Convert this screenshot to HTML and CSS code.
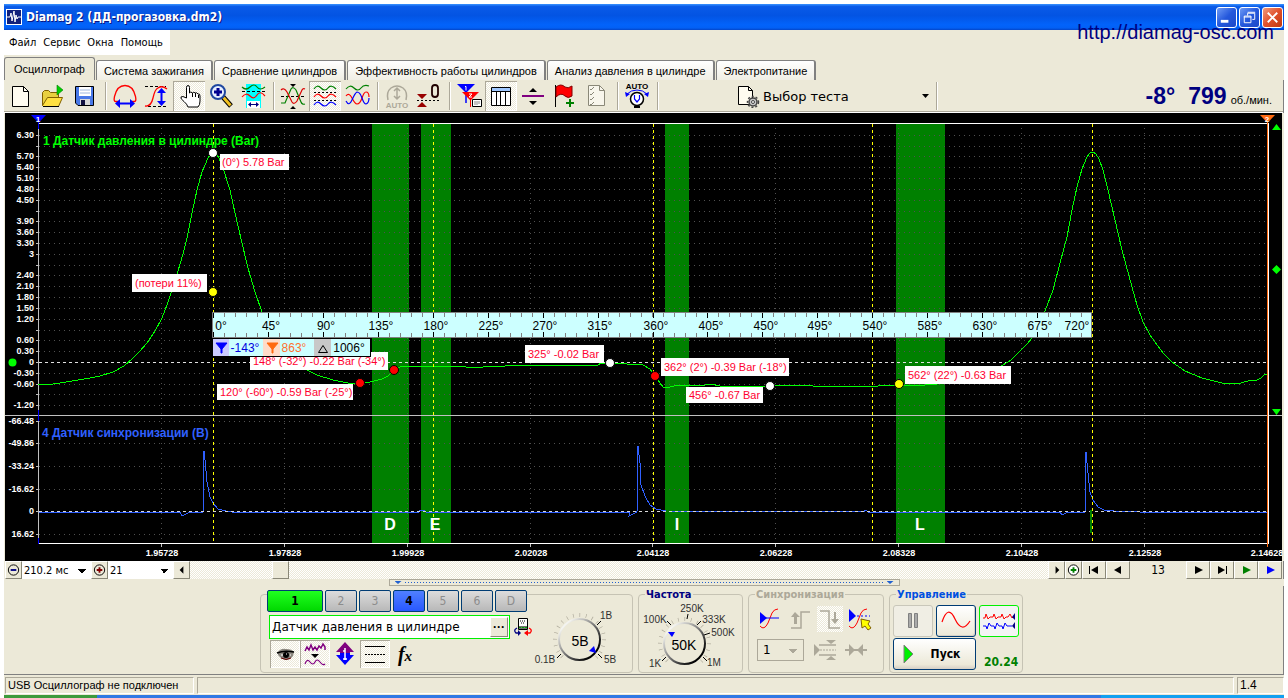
FILE: index.html
```html
<!DOCTYPE html>
<html lang="ru">
<head>
<meta charset="utf-8">
<title>Diamag 2 (ДД-прогазовка.dm2)</title>
<link rel="stylesheet" href="styles.css">
</head>
<body>
<div class="window">
  <header class="titlebar">
    <svg class="app-icon" width="16" height="16" viewBox="0 0 16 16"><rect width="16" height="16" fill="#fff"/><rect x="1" y="1" width="14" height="14" fill="#10207c"/><path d="M1 8h3l1-4 1 8 2-10 1 11 1-7 1 4 1-2h3" fill="none" stroke="#fff"/></svg>
    <h1 class="title">Diamag 2 (ДД-прогазовка.dm2)</h1>
    <div class="win-buttons">
      <button class="win-btn" aria-label="Свернуть"><svg width="20" height="20" viewBox="0 0 20 20"><path d="M4 14h8" stroke="#fff" stroke-width="3"/></svg></button>
      <button class="win-btn" aria-label="Восстановить"><svg width="20" height="20" viewBox="0 0 20 20" fill="none" stroke="#fff"><path d="M8 8V5.500h7.500V12H13M8 4.500h8"/><path d="M4.500 8.500h7v7h-7zM4 9.500h8"/></svg></button>
      <button class="win-btn close" aria-label="Закрыть"><svg width="20" height="20" viewBox="0 0 20 20"><path d="M5 5l10 10M15 5L5 15" stroke="#fff" stroke-width="2"/></svg></button>
    </div>
    <a class="site-link" href="#">http://diamag-osc.com</a>
  </header>

  <nav class="menu">
    <button>Файл</button><button>Сервис</button><button>Окна</button><button>Помощь</button>
  </nav>

  <div class="tabs" role="tablist">
    <button class="tab active" role="tab" aria-selected="true">Осциллограф</button>
    <button class="tab" role="tab">Система зажигания</button>
    <button class="tab" role="tab">Сравнение цилиндров</button>
    <button class="tab" role="tab">Эффективность работы цилиндров</button>
    <button class="tab" role="tab">Анализ давления в цилиндре</button>
    <button class="tab" role="tab">Электропитание</button>
  </div>

  <div class="toolbar">
    <button class="tool" aria-label="Новый"><svg viewBox="0 0 32 30"><path d="M7.500 5.500h11l5 5v15h-16z" fill="#fffcf0" stroke="#000"/><path d="M18.500 5.500v5h5" fill="none" stroke="#000"/></svg></button>
    <button class="tool" aria-label="Открыть"><svg viewBox="0 0 32 30"><path d="M5.500 24.500v-13l2-2h4l2 2h8v5" fill="#e8d040" stroke="#806000"/><path d="M5.500 24.500l5-8h15l-4 9h-15z" fill="#ffe040" stroke="#806000"/><path d="M6 25.500h16" stroke="#000"/><path d="M20 4v10l6-5z" fill="#00d000" stroke="#008000" stroke-width=".6"/></svg></button>
    <button class="tool" aria-label="Сохранить"><svg viewBox="0 0 32 30"><path d="M6.500 5.500h18v19H9l-2.500-2.500z" fill="#4878e8" stroke="#000"/><path d="M10 6h12v9H10z" fill="#fff"/><path d="M11 9h10M11 12h10" stroke="#a0b8e0"/><path d="M11 18h10v6H11z" fill="#d8d8d8"/><path d="M12 19h4v5h-4z" fill="#101040"/></svg></button>
    <span class="sep"></span>
    <button class="tool" aria-label="Период"><svg viewBox="0 0 32 30" fill="none"><path d="M9 20.500H6.500q-2 0-1-5Q8 4.500 16 4.500t10.500 11q1 5-1 5H23" stroke="#f00" stroke-width="1.300"/><path d="M8 22.500h16" stroke="#00f" stroke-width="2"/><path d="M11 18v9l-5-4.500zM21 18v9l5-4.500z" fill="#00f"/></svg></button>
    <button class="tool" aria-label="Амплитуда"><svg viewBox="0 0 32 30" fill="none"><path d="M4 5.500h21M7 25.500h18" stroke="#000" stroke-dasharray="3 2"/><path d="M4 25q6 1 8-8t5-10q4-3 9 1" stroke="#f00" stroke-width="1.300"/><path d="M20.500 9v13" stroke="#00f" stroke-width="2"/><path d="M16 12h9l-4.500-5zM16 20h9l-4.500 5z" fill="#00f"/></svg></button>
    <button class="tool pressed" aria-label="Рука"><svg viewBox="0 0 32 30"><path d="M13.500 17V6.500q0-2 1.500-2t1.500 2V12q1-2 3 0 1-1.500 3 0 1-1 2.500 1 2-.5 2 2v5q0 4-2 6H15q-1-3-4-5.500-4-3-3-4.500t5.500 1z" fill="#fff" stroke="#000"/><path d="M19.500 12v4M22.500 12v4M25.500 14v3" stroke="#000"/></svg></button>
    <button class="tool" aria-label="Масштаб"><svg viewBox="0 0 32 30"><path d="M18 16l8 9" stroke="#000" stroke-width="5"/><path d="M18.500 16.500l7 8" stroke="#f0c020" stroke-width="3"/><circle cx="13" cy="11" r="7" fill="#e8f0ff" stroke="#2048a0" stroke-width="2"/><path d="M13 7v8M9 11h8" stroke="#000090" stroke-width="3"/></svg></button>
    <button class="tool" aria-label="Участок"><svg viewBox="0 0 32 30" fill="none"><path d="M9 3h15v24H9z" fill="#0ff"/><path d="M5 6q4 4 8 0t7 0 8 0" stroke="#008000" stroke-width="1.200"/><path d="M5 10.500h23" stroke="#000" stroke-dasharray="3 2"/><path d="M5 16q4-5 8-1t7-1 8 1" stroke="#f00" stroke-width="1.200"/><path d="M10 20h13v7H10z" fill="#fff"/><path d="M12 23.500h9" stroke="#000080"/><path d="M14 21v5l-3-2.500zM19 21v5l3-2.500z" fill="#000080"/></svg></button>
    <span class="sep"></span>
    <button class="tool" aria-label="Наложение"><svg viewBox="0 0 32 30" fill="none"><path d="M4 15.500h24" stroke="#000" stroke-dasharray="3 2"/><path d="M4 22h4l6-14q2-3 5 1l5 12q1 3 4 2" stroke="#008000" stroke-width="1.200"/><path d="M4 9q3-3 6 2l5 10q2 3 5-1l5-11q1-2 3-1" stroke="#d00" stroke-width="1.200"/><path d="M13 3h6l-3 3zM13 28h6l-3-3z" fill="#000"/></svg></button>
    <button class="tool pressed" aria-label="Раздельно"><svg viewBox="0 0 32 30" fill="none"><path d="M5 8q3-5 7-1t7 0 8 1" stroke="#008000" stroke-width="1.200"/><path d="M5 11.500h23M5 19.500h23" stroke="#000" stroke-dasharray="2 2"/><path d="M5 16q3-5 7-1t7 0 8 1" stroke="#f00" stroke-width="1.200"/><path d="M5 24q3-5 7-1t7 0 8 1" stroke="#00f" stroke-width="1.200"/></svg></button>
    <button class="tool" aria-label="Совместно"><svg viewBox="0 0 32 30" fill="none"><path d="M5 8q4-5 8-1t7 0 8-2" stroke="#008000" stroke-width="1.200"/><path d="M5 15q3-4 6 2t5 6q3 0 5-6t4-6q3 0 3 5" stroke="#f00" stroke-width="1.200"/><path d="M5 20q3 6 6-1t5-8q3 0 5 6t4 6q3-1 3-6" stroke="#00f" stroke-width="1.200"/></svg></button>
    <span class="sep"></span>
    <button class="tool" aria-label="Авто" disabled><svg viewBox="0 0 32 30" fill="none"><path d="M7 19q-2-8 3-12 6-4 12 0 5 4 3 12M16 7v11M13 10l3-3 3 3M13 15l3 3 3-3" stroke="#aca899" stroke-width="1.500"/><text x="16" y="27" class="auto gray">AUTO</text></svg></button>
    <button class="tool" aria-label="Ноль"><svg viewBox="0 0 32 30"><path d="M4 13h10l-5 5zM4 26h10l-5-5z" fill="#900"/><path d="M4 19.500h23" stroke="#000" stroke-dasharray="2 2"/><rect x="19" y="4" width="6" height="12" rx="3" fill="none" stroke="#200000" stroke-width="1.800"/></svg></button>
    <span class="sep"></span>
    <button class="tool" aria-label="Маркеры"><svg viewBox="0 0 32 30"><path d="M4 3h18l-9 9z" fill="#00f"/><path d="M13 8v14" stroke="#00f" stroke-width="1.500"/><path d="M9 11h17l-8 8v7h-1v-7z" fill="#f00"/><path d="M12 5.500h1v4" fill="none" stroke="#fff"/><path d="M16 13h3l-3 3h3" fill="none" stroke="#fff"/><path d="M19.500 18.500h9v7h-9z" fill="#fff" stroke="#000"/><path d="M22 20v4M24 20v4M26 20v3" stroke="#888"/></svg></button>
    <button class="tool pressed" aria-label="Таблица"><svg viewBox="0 0 32 30"><path d="M6.500 6.500h19v18h-19z" fill="#fff" stroke="#000"/><path d="M7 7h18v3H7z" fill="#a0c8ff"/><path d="M7 10.500h18M11.500 11v13M15.500 11v13M20.500 11v13" stroke="#000"/></svg></button>
    <button class="tool" aria-label="Разделитель"><svg viewBox="0 0 32 30"><path d="M5 15h22" stroke="#800080" stroke-width="2"/><path d="M12 11h8l-4-4zM12 20h8l-4 4z" fill="#000"/></svg></button>
    <button class="tool" aria-label="Флаг"><svg viewBox="0 0 32 30"><path d="M6.500 4v22" stroke="#000"/><path d="M7 6q5-4 9 0 3 2 7-1v10q-4 3-7 0-4-4-9 1z" fill="#f00" stroke="#800000"/><path d="M21 18v8M17 22h8" stroke="#008000" stroke-width="2"/></svg></button>
    <button class="tool" aria-label="Список" disabled><svg viewBox="0 0 32 30"><path d="M7.500 4.500h11l5 5v15h-16z" fill="#f8f6ec" stroke="#8a8878"/><path d="M18.500 4.500v5h5M9 8l1 1 3-3M9 13l1 1 3-3M9 18l1 1 3-3M9 23l1 1 3-3" fill="none" stroke="#8a8878"/></svg></button>
    <span class="sep"></span>
    <button class="tool" aria-label="Авто напряжение"><svg viewBox="0 0 32 30" fill="none"><text x="16" y="8" class="auto">AUTO</text><path d="M6 13q4-4 10-4t10 4" stroke="#00f"/><path d="M4 11l1 5 4-3zM28 11l-1 5-4-3z" fill="#00f"/><circle cx="16" cy="18" r="6.500" fill="#fff" stroke="#000" stroke-width="1.500"/><path d="M13.500 14v4l2.500 3 2.500-3v-4" stroke="#00f" stroke-width="1.200"/><path d="M13 26h6" stroke="#000" stroke-width="2"/></svg></button>
    <span class="sep"></span>
    <button class="test-pick">
      <svg width="24" height="24" viewBox="0 0 24 24"><path d="M2.500 2.500h10l4 4v14h-14z" fill="#fffcf0" stroke="#000"/><path d="M12.500 2.500v4h4" fill="none" stroke="#000"/><circle cx="17" cy="18" r="4" fill="#c8c8c8" stroke="#444" stroke-width="1.500"/><circle cx="17" cy="18" r="5.500" fill="none" stroke="#444" stroke-width="1.500" stroke-dasharray="2 2"/><circle cx="17" cy="18" r="1.500" fill="#fff" stroke="#444"/></svg>
      <span class="test-name">Выбор теста</span>
      <span class="caret"></span>
    </button>
    <span class="sep"></span>
    <div class="rpm"><b>-8°</b><b>799</b><span>об./мин.</span></div>
  </div>

  <svg class="chart" viewBox="5 113 1277 448" role="img" aria-label="Осциллограмма">
    <rect x="5" y="113" width="1277" height="448" fill="#000"/>
    <g fill="#008000"><path d="M372 124h37v419h-37zM421 124h30v419h-30zM665 124h24v419h-24zM896 124h49v419h-49z"/></g>
    <path class="grid" d="M39 135.500h1228M39 146.500h1228M39 156.500h1228M39 167.500h1228M39 178.500h1228M39 189.500h1228M39 200.500h1228M39 211.500h1228M39 221.500h1228M39 232.500h1228M39 243.500h1228M39 254.500h1228M39 265.500h1228M39 275.500h1228M39 286.500h1228M39 297.500h1228M39 308.500h1228M39 319.500h1228M39 330.500h1228M39 340.500h1228M39 351.500h1228M39 373.500h1228M39 384.500h1228M39 394.500h1228M39 405.500h1228M39 421.500h1228M39 443.500h1228M39 466.500h1228M39 489.500h1228M39 534.500h1228"/>
    <path class="grid" d="M161.500 128v415M284.500 128v415M407.500 128v415M530.500 128v415M652.500 128v415M775.500 128v415M898.500 128v415M1021.500 128v415M1144.500 128v415"/>
    <path class="thin" stroke="#c0c0c0" d="M38.500 123v420M5 415.500h1277M36 135.500h3M36 146.500h3M36 156.500h3M36 167.500h3M36 178.500h3M36 189.500h3M36 200.500h3M36 211.500h3M36 221.500h3M36 232.500h3M36 243.500h3M36 254.500h3M36 265.500h3M36 275.500h3M36 286.500h3M36 297.500h3M36 308.500h3M36 319.500h3M36 330.500h3M36 340.500h3M36 351.500h3M36 362.500h3M36 373.500h3M36 384.500h3M36 394.500h3M36 405.500h3M36 421.500h3M36 443.500h3M36 466.500h3M36 489.500h3M36 511.500h3M36 534.500h3M161.500 544v3M284.500 544v3M407.500 544v3M530.500 544v3M652.500 544v3M775.500 544v3M898.500 544v3M1021.500 544v3M1144.500 544v3"/>
    <path class="thin" stroke="#fff" d="M38 123.500h1231M38 543.500h1231M1268.500 123v421"/>
    <path class="thin" stroke="#ff6a10" d="M1267.500 121v426"/>
    <path class="thin" stroke="#00f" d="M38.500 122v7M38.500 410v11M38.500 538v6"/>
    <path class="thin" stroke="#e0e0e0" stroke-dasharray="3 3" d="M39 362.500h1228"/>
    <polyline class="trace" stroke="#00ff00" points="38,384 53,384 60,383 90,378 100,376 113,372 124,366 133,358 140,351 147,343 155,331 162,318 167,305 172,290 178,271 183,254 187,238 192,213 197,190 202,172 208,158 211,154 213,153 216,154 219,158 223,168 230,190 235,213 242,243 248,268 255,292 262,312 270,331 280,348 292,361 305,369 317,375 333,380 348,383 360,384 370,382 382,379 388,376 394,370 400,367 407,366 413,366 430,367 450,366 466,367 483,367 505,366 533,365 598,365 601,363 615,363 627,364 643,365 650,369 655,376 660,383 663,387 667,388 677,385 690,385 700,386 711,384 720,386 745,386 770,386 795,385 813,386 878,386 887,385 900,386 925,385 937,384 965,382 985,375 1003,365 1011,360 1020,351 1027,344 1032,338 1039,326 1045,311 1053,290 1060,263 1067,237 1072,210 1077,187 1082,169 1087,157 1090,153 1093,152 1096,154 1099,159 1103,170 1108,190 1115,220 1122,250 1132,287 1137,305 1143,322 1150,335 1157,345 1164,354 1172,362 1185,371 1202,378 1222,383 1237,384 1248,381 1257,380 1261,378 1264,375 1267,374"/>
    <polyline class="trace" stroke="#3060ff" points="39,512 160,512 180,512 182,516 186,514 190,512 203,512 204,451 205,460 207,482 210,497 213,503 218,509 226,511 232,512 258,513 262,512 419,512 420,510 425,511 426,512 630,512 629,516 633,514 637,512 638,446 640,463 641,485 645,496 650,505 656,509 666,511 863,512 866,510 868,512 1060,512 1062,515 1068,512 1085,512 1086,452 1088,473 1090,492 1093,500 1098,507 1104,510 1114,511 1140,512 1267,512"/>
    <path class="thin" stroke="#d8d8d8" stroke-dasharray="3 3" d="M39 511.500h1228"/>
    <path class="thin" stroke="#ffff00" stroke-dasharray="3 3" d="M213.500 124v419M433.500 124v419M653.500 124v419M872.500 124v419M1092.500 124v419"/>
    <path d="M1090 510h2v23h-2z" fill="#008000"/>

    <g class="axis" text-anchor="end">
      <text x="34" y="138">6.30</text><text x="34" y="159">5.70</text><text x="34" y="170">5.40</text><text x="34" y="181">5.10</text><text x="34" y="192">4.80</text><text x="34" y="203">4.50</text><text x="34" y="224">3.90</text><text x="34" y="235">3.60</text><text x="34" y="246">3.30</text><text x="34" y="257">3</text><text x="34" y="278">2.40</text><text x="34" y="289">2.10</text><text x="34" y="300">1.80</text><text x="34" y="311">1.50</text><text x="34" y="322">1.20</text><text x="34" y="343">0.60</text><text x="34" y="354">0.30</text><text x="34" y="365">0</text><text x="34" y="376">-0.30</text><text x="34" y="387">-0.60</text><text x="34" y="408">-1.20</text><text x="34" y="424">-66.48</text><text x="34" y="446">-49.86</text><text x="34" y="469">-33.24</text><text x="34" y="492">-16.62</text><text x="34" y="514">0</text><text x="34" y="537">16.62</text>
    </g>
    <g class="axis" text-anchor="middle">
      <text x="162" y="556">1.95728</text><text x="285" y="556">1.97828</text><text x="408" y="556">1.99928</text><text x="531" y="556">2.02028</text><text x="653" y="556">2.04128</text><text x="776" y="556">2.06228</text><text x="899" y="556">2.08328</text><text x="1022" y="556">2.10428</text><text x="1145" y="556">2.12528</text><text x="1267" y="556">2.14628</text>
    </g>
    <text class="channel" x="43" y="145" fill="#00ff00">1 Датчик давления в цилиндре (Bar)</text>
    <text class="channel" x="42" y="437" fill="#3060ff">4 Датчик синхронизации (B)</text>
    <g class="zone"><text x="390" y="530">D</text><text x="435" y="530">E</text><text x="677" y="530">I</text><text x="920" y="530">L</text></g>

    <path d="M31 115h15l-7.500 8z" fill="#00f"/><text class="mark" x="38" y="122">1</text>
    <path d="M1260 115h15l-7.500 8z" fill="#ff6a10"/><text class="mark" x="1267" y="122">2</text>
    <g fill="#00ff00"><path d="M1272 130h9l-4.500-6zM1272 409h9l-4.500 6zM1276.500 265l4.500 4.500-4.500 4.500-4.500-4.500z"/><circle cx="12.500" cy="362.500" r="4"/></g>

    <g stroke="#000"><circle cx="213" cy="153" r="4.500" fill="#fff"/><circle cx="213" cy="292" r="4.500" fill="#ff0"/><circle cx="360" cy="383" r="4.500" fill="#f00"/><circle cx="394" cy="370" r="4.500" fill="#f00"/><circle cx="610" cy="363" r="4.500" fill="#fff"/><circle cx="655" cy="376" r="4.500" fill="#f00"/><circle cx="770" cy="386" r="4.500" fill="#fff"/><circle cx="899" cy="384" r="4.500" fill="#ff0"/></g>

    <path fill="#fff" stroke="none" d="M220 154h69v16h-69zM132 274h75v18h-75zM250 352h138v18H250zM217 384h136v16H217zM525 345h79v18h-79zM661 358h128v18H661zM686 387h77v16h-77zM905 366h106v18H905z"/>
    <g class="note">
      <text x="222" y="166">(0°) 5.78 Bar</text>
      <text x="135" y="287">(потери 11%)</text>
      <text x="253" y="365">148° (-32°) -0.22 Bar (-34°)</text>
      <text x="220" y="396">120° (-60°) -0.59 Bar (-25°)</text>
      <text x="528" y="358">325° -0.02 Bar</text>
      <text x="664" y="371">362° (2°) -0.39 Bar (-18°)</text>
      <text x="689" y="399">456° -0.67 Bar</text>
      <text x="908" y="379">562° (22°) -0.63 Bar</text>
    </g>

    <path d="M212.500 312.500h879v25h-879z" fill="#ccffff" stroke="#808080"/>
    <g class="thin" fill="none">
      <path stroke="#808080" stroke-width="4" stroke-dasharray="1 9.986" d="M213 315h878M213 335h878"/>
      <path stroke="#000" stroke-width="5" stroke-dasharray="1 53.930" stroke-dashoffset="-55" d="M213 315.500h878M213 334.500h878"/>
    </g>
    <g class="scale"><text x="221" y="330">0°</text><text x="271" y="330">45°</text><text x="326" y="330">90°</text><text x="381" y="330">135°</text><text x="436" y="330">180°</text><text x="491" y="330">225°</text><text x="545" y="330">270°</text><text x="600" y="330">315°</text><text x="656" y="330">360°</text><text x="711" y="330">405°</text><text x="766" y="330">450°</text><text x="820" y="330">495°</text><text x="875" y="330">540°</text><text x="930" y="330">585°</text><text x="985" y="330">630°</text><text x="1040" y="330">675°</text><text x="1077" y="330">720°</text></g>

    <path d="M213 338h158v19H213z" fill="#000"/>
    <path d="M213 339h157v17H213z" fill="#ccffff"/>
    <path d="M213 339h16v17h-16z" fill="#ccccff"/><path d="M263 339h17v17h-17z" fill="#ffdcc8"/><path d="M314 339h17v17h-17z" fill="#c8c8c8"/>
    <path d="M216 343h11l-5 6v4h-1v-4z" fill="#00f" stroke="#00f"/><path d="M267 343h11l-5 6v4h-1v-4z" fill="#ff6a10" stroke="#ff6a10"/><path d="M318.500 352.500h9l-4.500-7z" fill="none" stroke="#000"/>
    <g class="scale"><text x="245" y="352" fill="#0000e0">-143°</text><text x="294" y="352" fill="#ff7030">863°</text><text x="349" y="352">1006°</text></g>
  </svg>

  <div class="scroll-row">
    <button class="sq" aria-label="Уменьшить"><svg viewBox="0 0 16 16"><circle cx="8" cy="8" r="5.500" fill="none" stroke="#000"/><path d="M5 8h6" stroke="#000080" stroke-width="2"/></svg></button>
    <select class="span-sel" aria-label="Развёртка"><option>210.2 мс</option></select>
    <button class="sq" aria-label="Увеличить"><svg viewBox="0 0 16 16"><circle cx="8" cy="8" r="5.500" fill="none" stroke="#000"/><path d="M5 8h6M8 5v6" stroke="#800000" stroke-width="2"/></svg></button>
    <select class="div-sel" aria-label="Делений"><option>21</option></select>
    <button class="sq" aria-label="Влево"><svg viewBox="0 0 16 16"><path d="M10 4v8L6 8z"/></svg></button>
    <div class="track"><div class="thumb"></div></div>
    <button class="sq" aria-label="Вправо"><svg viewBox="0 0 16 16"><path d="M7 4v8l4-4z"/></svg></button>
    <button class="sq" aria-label="Добавить"><svg viewBox="0 0 16 16"><circle cx="8" cy="8" r="5.500" fill="#fff" stroke="#000"/><path d="M5 8h6M8 5v6" stroke="#008000" stroke-width="2"/></svg></button>
    <button class="nav" aria-label="В начало"><svg viewBox="0 0 22 16"><path d="M15 4v8L8 8zM6 4h1v8H6z"/></svg></button>
    <button class="nav" aria-label="Назад"><svg viewBox="0 0 22 16"><path d="M14 4v8L7 8z"/></svg></button>
    <span class="page-no">13</span>
    <button class="nav" aria-label="Вперёд"><svg viewBox="0 0 22 16"><path d="M8 4v8l8-4z"/></svg></button>
    <button class="nav" aria-label="В конец"><svg viewBox="0 0 22 16"><path d="M7 4v8l7-4zM15 4h1v8h-1z"/></svg></button>
    <button class="nav" aria-label="Воспроизвести"><svg viewBox="0 0 22 16"><path d="M8 4v8l8-4z" fill="#008000"/></svg></button>
    <button class="nav" aria-label="Воспроизвести всё"><svg viewBox="0 0 22 16"><path d="M8 4v8l8-4z" fill="#00f"/></svg></button>
  </div>

  <div class="collapse"><i></i><span></span><i></i></div>

  <div class="panels">
    <section class="group channels">
      <div class="channel-left">
        <div class="ch-row"><button class="ch ch1">1</button><button class="ch">2</button><button class="ch">3</button><button class="ch ch4">4</button><button class="ch">5</button><button class="ch">6</button><button class="ch">D</button></div>
        <div class="name-row">
          <div class="name-box"><input aria-label="Датчик" value="Датчик давления в цилиндре"><button class="dots" aria-label="Выбрать датчик">···</button></div>
          <svg width="20" height="20" viewBox="0 0 20 20"><path d="M5.500 1.500h9v11h-9z" fill="#fff" stroke="#000"/><path d="M6 9h8v3H6z" fill="#707070"/><path d="M6 10.500h8" stroke="#0a0" stroke-dasharray="2 1"/><path d="M7 4h6M8 6h3" stroke="#000" stroke-dasharray="1 1"/><path d="M4 11q-4 2-1 5h2" fill="none" stroke="#000080" stroke-width="1.300"/><path d="M5 13v6l3-3z" fill="#000080"/><path d="M16 11q4 2 1 5h-2" fill="none" stroke="#f00" stroke-width="1.300"/><path d="M15 13v6l-4-3z" fill="#f00"/></svg>
        </div>
        <div class="mode-row">
          <button class="mode pressed" aria-label="Показать"><svg viewBox="0 0 30 28"><path d="M8 12q3-4 8-3 6 0 8 3l-1 4q-3 4-7 4-5-1-8-5z" fill="#8c8880"/><path d="M7 13q7-3 17-1" fill="none" stroke="#000" stroke-width="1.500"/><circle cx="16" cy="15" r="3" fill="#000"/><path d="M11 15h2M20 15h1M16 14h1" stroke="#fff"/><path d="M11 18q5 3 10 0" fill="none" stroke="#600"/></svg></button>
          <button class="mode pressed" aria-label="Фильтр"><svg viewBox="0 0 30 28"><path d="M5 11l2-4 2 3 2-5 2 5 2-3 2 3 2-4 2 2 2-4 2 3v3" fill="none" stroke="#800080" stroke-width="1.500"/><path d="M11 14h8l-4 4z"/><path d="M5 24q2-6 5-2t5 0 5 0 5 2" fill="none" stroke="#800080" stroke-width="1.200"/></svg></button>
          <button class="mode" aria-label="Инверсия"><svg viewBox="0 0 30 28"><path d="M6 12l9-10 9 10h-4v2H10v-2z" fill="#800080"/><path d="M6 15l9 10 9-10h-4v-2H10v2z" fill="#00f"/><path d="M15 8v12M13 11h2M13 19h4" stroke="#fff" stroke-width="1.500"/></svg></button>
          <button class="mode pressed" aria-label="Сетка"><svg viewBox="0 0 30 28"><path d="M5 6.500h20M5 22.500h20" stroke="#000"/><path d="M5 14.500h20" stroke="#000" stroke-dasharray="2 1"/></svg></button>
          <button class="mode" aria-label="Функция"><span class="fx">f<small>x</small></span></button>
        </div>
      </div>
      <svg class="knob" width="98" height="76" viewBox="535 596 98 76">
        <defs><linearGradient id="rim" x1="0" y1="0" x2="1" y2="1"><stop offset=".15" stop-color="#f4f4f0"/><stop offset=".5" stop-color="#777"/><stop offset=".85" stop-color="#000"/></linearGradient></defs>
        <circle cx="580.500" cy="640.500" r="24.500" class="ticks" pathLength="240" transform="rotate(135 580.500 640.500)"/>
        <circle cx="580.500" cy="640.500" r="20.500" fill="#ece9d8" stroke="url(#rim)" stroke-width="2"/>
        <path d="M598 626l4-4M599 655l4 4M562 655l-4 4" stroke="#000"/>
        <path d="M590 652l5-5 2 7z" fill="#00f"/>
        <g class="knob-label"><text x="607" y="620" text-anchor="middle">1B</text><text x="546" y="664" text-anchor="middle">0.1B</text><text x="611" y="664" text-anchor="middle">5B</text></g>
        <text class="knob-value" x="581" y="647">5B</text>
      </svg>
    </section>

    <section class="group freq">
      <h2 class="navy">Частота</h2>
      <svg class="knob" width="103" height="70" viewBox="639 602 103 70">
        <circle cx="684.500" cy="643.500" r="24.500" class="ticks" pathLength="240" transform="rotate(135 684.500 643.500)"/>
        <circle cx="684.500" cy="643.500" r="20.500" fill="#ece9d8" stroke="url(#rim)" stroke-width="2"/>
        <path d="M667 621l4 4M687 619l1-5M697 625l4-4M704 635l6-2M703 657l4 4M666 657l-4 4" stroke="#000"/>
        <path d="M668 632h7l-3 5z" fill="#00f"/>
        <g class="knob-label" text-anchor="middle"><text x="655" y="623">100K</text><text x="692" y="612">250K</text><text x="714" y="623">333K</text><text x="723" y="636">500K</text><text x="655" y="667">1K</text><text x="714" y="666">1M</text></g>
        <text class="knob-value" x="684" y="650">50K</text>
      </svg>
    </section>

    <section class="group sync">
      <h2 class="gray">Синхронизация</h2>
      <div class="sync-row">
        <button class="sy" aria-label="Уровень"><svg viewBox="0 0 26 26"><path d="M3 20q4 5 8-3l4-10q2-4 6-4" fill="none" stroke="#f00"/><path d="M3 12h19" stroke="#00f"/><path d="M3 6v12l7-6z" fill="#00f"/></svg></button>
        <button class="sy" aria-label="Фронт"><svg viewBox="0 0 26 26"><path d="M4 22h10V6h9" fill="none" stroke="#aca899" stroke-width="1.500"/><path d="M8 6l-4 5h3v7h3v-7h3z" fill="#aca899"/></svg></button>
        <button class="sy dither" aria-label="Спад"><svg viewBox="0 0 26 26"><path d="M3 5h9v17h11" fill="none" stroke="#aca899" stroke-width="1.500"/><path d="M18 18l-4-5h3V6h2v7h3z" fill="#aca899"/></svg></button>
        <button class="sy" aria-label="Выбор уровня"><svg viewBox="0 0 26 26"><path d="M2 20q4 5 8-3l4-10q2-4 6-4" fill="none" stroke="#f00"/><path d="M10 10h13" stroke="#00f" stroke-dasharray="2 2"/><path d="M2 3v13l7-6z" fill="#00f"/><path d="M14 13l9 2-2 3 3 4-3 2-3-4-3 2z" fill="#ff0" stroke="#806000"/></svg></button>
      </div>
      <div class="sync-row">
        <select class="sync-sel" aria-label="Канал синхронизации" disabled><option>1</option></select>
        <svg width="26" height="24" viewBox="0 0 26 24"><path d="M4 6v12l6-6z" fill="#aca899"/><path d="M9 7h17M9 17h17" stroke="#aca899" stroke-width="1.500"/><path d="M10 12h16" stroke="#aca899" stroke-dasharray="2 1"/><path d="M16 2h10l-5 4zM16 22h10l-5-4z" fill="#aca899"/></svg>
        <svg width="26" height="24" viewBox="0 0 26 24"><path d="M3 11h22v2H3z" fill="#aca899"/><path d="M7 6v12l6-6zM21 6v12l-6-6z" fill="#aca899"/></svg>
      </div>
    </section>

    <section class="group control">
      <h2 class="blue">Управление</h2>
      <div class="ctl-row">
        <button class="ctl off" aria-label="Пауза" disabled><svg width="14" height="18" viewBox="0 0 14 18"><path d="M2.500 1.500h3v14h-3zM8.500 1.500h3v14h-3z" fill="#aaa" stroke="#808080"/></svg></button>
        <button class="ctl" aria-label="Один луч"><svg width="30" height="24" viewBox="0 0 30 24"><path d="M1 13Q7-5 14 10t15 2" fill="none" stroke="#f00" stroke-width="1.200"/></svg></button>
        <button class="ctl green" aria-label="Два луча"><svg width="34" height="24" viewBox="0 0 34 24" fill="none"><path d="M1 9h2l1-4 2 5 2-2h3l1-3 2 5 2-2h3l1-3 2 5 2-2h2l2-3 2 4 2-2" stroke="#f00"/><path d="M1 17h3l1 3 2-6 2 3h3l1 3 2-6 2 3h3l1 3 2-6 2 3h5" stroke="#00f"/><path d="M33 4v7l-3-3zM33 13v7l-3-3z" fill="#000080"/></svg></button>
      </div>
      <div class="ctl-row">
        <button class="start"><svg width="14" height="22" viewBox="0 0 14 22"><path d="M2 2v18l9-9z" fill="#00f000" stroke="#808080"/></svg><span>Пуск</span></button>
        <output class="reading">20.24</output>
      </div>
    </section>
  </div>

  <footer class="status"><span class="st st-main">USB Осциллограф не подключен</span><span class="st st-mid"></span><span class="st st-ver">1.4</span></footer>
</div>
<div class="taskbar"><i class="start-part"></i><i class="tasks"></i><i class="tray"></i></div>
</body>
</html>
```
FILE: styles.css
```css
* { box-sizing: border-box; }
body { margin: 0; padding: 4px 4px 0; background: #fff; font-family: "Liberation Sans", sans-serif; font-size: 12px; color: #000; overflow: hidden; }
button { font: inherit; color: inherit; padding: 0; margin: 0; border: 0; background: none; }
button svg { display: block; }
select, input { font: inherit; margin: 0; }
.window { display: flex; flex-direction: column; background: #ece9d8; }

.titlebar { position: relative; display: flex; align-items: center; gap: 4px; height: 26px; padding: 0 1px 0 2px; background: linear-gradient(#3a93ff 0, #0a5ae8 10%, #0354e3 45%, #0263fb 80%, #0260f5 92%, #0345c8); }
.title { flex: 1; margin: 0; color: #fff; font: bold 12px "DejaVu Sans Condensed", "Noto Sans", sans-serif; text-shadow: 1px 1px #0a1883; }
.win-buttons { display: flex; gap: 2px; }
.win-btn { width: 21px; height: 21px; border: 1px solid #fff; border-radius: 3px; background: linear-gradient(135deg, #6f9bf5, #2458dc 50%, #1c48c8); }
.win-btn svg { width: 19px; height: 19px; }
.win-btn.close { background: linear-gradient(135deg, #f09a7c, #e0502c 50%, #c03810); }
.site-link { position: absolute; right: 10px; top: 17px; color: #000080; font-size: 20px; line-height: 23px; text-decoration: none; }

.menu { display: flex; align-self: flex-start; gap: 7px; height: 25px; padding: 0 7px 0 5px; background: #fff; font: 11px "DejaVu Sans Condensed", "Noto Sans", sans-serif; }

.tabs { display: flex; align-items: flex-end; gap: 1px; height: 25px; font-size: 11px; }
.tab { height: 20px; padding: 0 7px; border: 1px solid #808080; border-width: 1px 2px 0 1px; border-radius: 3px 3px 0 0; background: linear-gradient(#fff, #f0eee4); white-space: nowrap; }
.tab.active { height: 23px; padding: 0 9px; border-right-width: 1px; background: #ece9d8; }

.toolbar { display: flex; align-items: center; height: 33px; padding: 0 0 1px 1px; border-right: 1px solid #808080; box-shadow: inset 0 -1px #fff, inset 0 -2px #aca899; }
.tool { flex: none; width: 32px; height: 30px; }
.tool svg { width: 32px; height: 30px; }
.pressed { background: repeating-conic-gradient(#fff 0 25%, #ece9d8 0 50%) 0 0 / 2px 2px; box-shadow: inset 1px 1px #aca899, inset -1px -1px #fff; }
.sep { flex: none; width: 8px; height: 28px; background: linear-gradient(90deg, transparent 4px, #aca899 4px 5px, #fff 5px 6px, transparent 6px); }
.auto { font: bold 8px "Liberation Sans", sans-serif; text-anchor: middle; fill: #000; }
.auto.gray { fill: #aca899; }
.test-pick { display: flex; align-items: center; width: 196px; margin-left: 75px; gap: 3px; font: 13px "DejaVu Sans", sans-serif; }
.test-name { flex: 1; text-align: left; }
.caret { width: 7px; height: 4px; margin-right: 3px; background: #000; clip-path: polygon(0 0, 100% 0, 50% 100%); }
.rpm { display: flex; align-items: baseline; margin-left: auto; margin-right: 11px; font-size: 11px; white-space: nowrap; }
.rpm b { margin-right: 4px; color: #000080; font-size: 23px; line-height: 28px; }
.rpm b:first-child { margin-right: 13px; }

.chart { display: block; width: calc(100% - 3px); margin-left: 1px; }
.thin, .trace, .grid { shape-rendering: crispEdges; fill: none; }
.grid { stroke: #505050; stroke-dasharray: 1 4; }
.trace { stroke-width: 1; }
.axis { font: bold 9px "Liberation Sans", sans-serif; fill: #fff; }
.channel { font: bold 12px "Liberation Sans", sans-serif; }
.zone { font: bold 16px "Liberation Sans", sans-serif; fill: #fff; text-anchor: middle; }
.mark { font: bold 8px "Liberation Sans", sans-serif; fill: #fff; text-anchor: middle; }
.note { font: 11px "Liberation Sans", sans-serif; fill: #ff0030; }
.scale { font: 12px "Liberation Sans", sans-serif; text-anchor: middle; }

.scroll-row { display: flex; height: 18px; padding: 0 1px; border-right: 1px solid #808080; font: 11px "DejaVu Sans Condensed", "Noto Sans", sans-serif; }
.scroll-row button { flex: none; height: 18px; border: 1px solid; border-color: #fff #8a8878 #8a8878 #fff; background: #ece9d8; }
.sq { width: 17px; }
.sq svg { width: 15px; height: 16px; }
.nav { width: 24px; }
.nav svg { width: 22px; height: 16px; }
.scroll-row select, .sync-sel { appearance: none; border: 0; color: #000; padding: 0 2px; }
.scroll-row select { background: conic-gradient(from -45deg at 50% 100%, #000 90deg, transparent 0) right 5px top 8px / 8px 4px no-repeat #fff; }
.span-sel { width: 69px; }
.div-sel { width: 65px; }
.track { flex: 1; padding-left: 82px; background: repeating-conic-gradient(#fff 0 25%, #ece9d8 0 50%) 0 0 / 2px 2px; }
.thumb { width: 17px; height: 18px; border: 1px solid; border-color: #fff #8a8878 #8a8878 #fff; background: #ece9d8; }
.page-no { width: 56px; text-align: center; font-size: 12px; line-height: 18px; }

.collapse { display: flex; align-items: center; gap: 3px; width: 511px; max-width: 100%; height: 7px; align-self: center; padding: 0 5px; border: 1px solid #aca899; }
.collapse i { width: 7px; height: 3px; background: #2060d0; clip-path: polygon(0 0, 100% 0, 50% 100%); }
.collapse span { flex: 1; height: 1px; background: repeating-linear-gradient(90deg, #2060d0 0 1px, transparent 1px 3px); }

.panels { display: flex; justify-content: center; gap: 5px; padding: 8px 4px 1px 0; border-right: 1px solid #808080; border-bottom: 1px solid #808080; }
.group { height: 79px; border: 1px solid #c6c3b4; border-radius: 4px; }
.group h2 { width: max-content; margin: -7px 0 0 6px; padding: 0 1px; background: #ece9d8; font: bold 11px/14px "DejaVu Sans Condensed", sans-serif; }
.navy { color: #000080; }
.group h2.gray { color: #aca899; }
.blue { color: #0050e0; }
.channels { display: flex; width: 373px; }
.channel-left { width: 273px; padding-left: 6px; }
.ch-row { display: flex; gap: 2px; width: 260px; margin-top: -5px; background: #ece9d8; }
.ch { flex: 1; height: 22px; border: 1px solid #003c74; border-radius: 2px; background: linear-gradient(#dcdcdc, #b8b8b8); color: #8c8c8c; font: 12px "DejaVu Sans Condensed", sans-serif; }
.ch1 { flex: none; width: 56px; background: linear-gradient(#20ff20, #00d800); color: #000; font-weight: bold; }
.ch4 { background: linear-gradient(#5080ff, #2858ff); color: #000; font-weight: bold; }
.name-row { display: flex; align-items: center; gap: 3px; margin: 3px 0 0 2px; }
.name-box { display: flex; width: 241px; height: 24px; padding: 1px; border: 1px solid #00f000; background: #fff; }
.name-box input { flex: 1; min-width: 0; border: 0; padding: 0 1px; background: none; font: 12px "DejaVu Sans", sans-serif; }
.dots { width: 18px; border: 1px solid; border-color: #fff #8a8878 #8a8878 #fff; background: #ece9d8; font-weight: bold; line-height: 12px; }
.mode-row { display: flex; margin: 1px 0 0 3px; }
.mode { width: 30px; height: 28px; }
.mode svg { width: 30px; height: 28px; }
.fx { font: italic bold 20px "Liberation Serif", serif; }
.fx small { font-size: 15px; }
.knob { display: block; }
.ticks { fill: none; stroke: #aca899; stroke-width: 4; stroke-dasharray: 1 9 1 9 1 9 1 9 1 9 1 9 1 9 1 9 1 9 1 9 1 9 1 9 1 9 1 9 1 9 1 9 1 9 1 9 1 59; }
.knob-label { font: 10px "Liberation Sans", sans-serif; fill: #303030; }
.knob-value { font: 14px "Liberation Sans", sans-serif; text-anchor: middle; }
.freq { width: 105px; }
.sync { width: 136px; }
.control { width: 134px; }
.sync-row { display: flex; gap: 4px; padding: 4px 0 0 8px; align-items: center; }
.sync-row + .sync-row { gap: 6px; padding-top: 6px; }
.sy { width: 26px; height: 26px; }
.sy svg { width: 26px; height: 26px; }
.dither { background: repeating-conic-gradient(#fff 0 25%, #ece9d8 0 50%) 0 0 / 2px 2px; }
.sync-sel { width: 47px; height: 22px; border: 1px solid #aca899; padding-left: 5px; opacity: 1; background: conic-gradient(from -45deg at 50% 100%, #aca899 90deg, transparent 0) right 6px top 9px / 8px 4px no-repeat; font: 12px "DejaVu Sans", sans-serif; }
.ctl-row { display: flex; gap: 3px; padding: 3px 0 0 3px; }
.ctl-row + .ctl-row { padding-top: 1px; }
.ctl { display: flex; align-items: center; justify-content: center; width: 40px; height: 32px; border: 1px solid #003c74; border-radius: 3px; background: linear-gradient(#fff, #ece9d8); box-shadow: inset -1px -1px #d6d0c5; }
.ctl.off { border-color: #c9c7ba; background: #f0eee4; box-shadow: none; }
.ctl.green { border: 1px solid #00f000; background: #f4f4f4; box-shadow: none; }
.start { display: flex; align-items: center; width: 83px; height: 32px; padding-left: 8px; border: 1px solid #003c74; border-radius: 3px; background: linear-gradient(#fff, #ece9d8 85%, #d6d0c5); font: bold 12px "DejaVu Sans Condensed", sans-serif; }
.start span { flex: 1; text-align: center; }
.reading { align-self: flex-end; margin: 0 0 1px 5px; color: #008000; font: bold 12px "DejaVu Sans Condensed", sans-serif; }

.status { display: flex; gap: 3px; padding: 2px 0 1px 1px; background: #ece9d8; font: 11px/15px "Liberation Sans", sans-serif; }
.st { height: 17px; padding-left: 2px; border: 1px solid; border-color: #aca899 #fff #fff #aca899; white-space: nowrap; }
.st-main { width: 189px; }
.st-mid { flex: 1; }
.st-ver { width: 47px; font-size: 12px; }
.taskbar { display: flex; height: 4px; }
.start-part { width: 93px; background: #3c9a3c; }
.tasks { flex: 1; background: #2f78e4; }
.tray { width: 183px; background: #12a0f0; }
```
